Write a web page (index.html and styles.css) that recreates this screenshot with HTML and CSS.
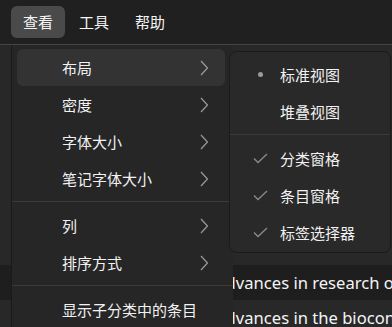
FILE: index.html
```html
<!DOCTYPE html>
<html lang="zh-CN">
<head>
<meta charset="utf-8">
<title>查看</title>
<link rel="stylesheet" href="styles.css">
</head>
<body>
<div class="app">
  <div class="menubar">
    <div class="mb-item active">查看</div>
    <div class="mb-item">工具</div>
    <div class="mb-item">帮助</div>
  </div>
  <div class="workspace">
    <div class="sidebar">
      <div class="side-row sel"></div>
      <div class="side-gap"></div>
      <div class="side-row empty"></div>
      <div class="side-row hl"></div>
    </div>
    <div class="pane">
      <div class="row dark"><span class="title">Advances in research on the biocontrol</span></div>
      <div class="row"><span class="title">Advances in the biocontrol of plant diseases</span></div>
    </div>
  </div>

  <div class="menu main-menu">
    <div class="item open"><span class="label">布局</span><svg class="chev" viewBox="0 0 9 16"><path d="M1 1 L7.5 8 L1 15"/></svg></div>
    <div class="item"><span class="label">密度</span><svg class="chev" viewBox="0 0 9 16"><path d="M1 1 L7.5 8 L1 15"/></svg></div>
    <div class="item"><span class="label">字体大小</span><svg class="chev" viewBox="0 0 9 16"><path d="M1 1 L7.5 8 L1 15"/></svg></div>
    <div class="item"><span class="label">笔记字体大小</span><svg class="chev" viewBox="0 0 9 16"><path d="M1 1 L7.5 8 L1 15"/></svg></div>
    <div class="sep"></div>
    <div class="item"><span class="label">列</span><svg class="chev" viewBox="0 0 9 16"><path d="M1 1 L7.5 8 L1 15"/></svg></div>
    <div class="item"><span class="label">排序方式</span><svg class="chev" viewBox="0 0 9 16"><path d="M1 1 L7.5 8 L1 15"/></svg></div>
    <div class="sep"></div>
    <div class="item"><span class="label">显示子分类中的条目</span></div>
  </div>

  <div class="menu sub-menu">
    <div class="sitem"><span class="mark"><span class="dot"></span></span><span class="label">标准视图</span></div>
    <div class="sitem"><span class="mark"></span><span class="label">堆叠视图</span></div>
    <div class="ssep"></div>
    <div class="sitem"><span class="mark"><svg class="check" viewBox="0 0 15 11"><path d="M1 5.5 L5 9.5 L14 1"/></svg></span><span class="label">分类窗格</span></div>
    <div class="sitem"><span class="mark"><svg class="check" viewBox="0 0 15 11"><path d="M1 5.5 L5 9.5 L14 1"/></svg></span><span class="label">条目窗格</span></div>
    <div class="sitem"><span class="mark"><svg class="check" viewBox="0 0 15 11"><path d="M1 5.5 L5 9.5 L14 1"/></svg></span><span class="label">标签选择器</span></div>
  </div>
</div>
</body>
</html>
```

FILE: styles.css
```css
* { box-sizing: border-box; }
html, body {
  margin: 0;
  padding: 0;
  width: 392px;
  height: 327px;
  overflow: hidden;
  background: #262626;
  color: #f2f2f2;
  font-family: "Noto Sans CJK SC", "Noto Sans", sans-serif;
  font-size: 15px;
}
.app {
  position: relative;
  width: 392px;
  height: 327px;
  overflow: hidden;
}
.menubar {
  height: 45px;
  background: #202020;
  border-bottom: 1px solid #444444;
  display: flex;
  align-items: flex-start;
  gap: 2px;
  padding: 6px 11px 0;
}
.mb-item {
  height: 32px;
  line-height: 32px;
  padding: 0 12px;
  border-radius: 6px;
  font-size: 15px;
  color: #f4f4f4;
}
.mb-item.active { background: #4a4a4a; }

.workspace {
  display: flex;
  height: 282px;
}
.sidebar {
  width: 11px;
  background: #2c2c2c;
  display: flex;
  flex-direction: column;
  padding-top: 5px;
}
.side-row { height: 35px; }
.side-row.sel { background: #3f3f3f; }
.side-row.empty { height: 51px; }
.side-row.hl { height: 36px; background: #434343; }
.side-gap { height: 5px; background: #1e1e1e; }

.pane {
  flex: 1;
  padding-top: 220px;
  background: #282828;
}
.row {
  height: 35px;
  display: flex;
  align-items: center;
  padding-left: 215px;
  white-space: nowrap;
  overflow: hidden;
  font-family: "Noto Sans", sans-serif;
  font-size: 16.6px;
  color: #f4f4f4;
}
.row.dark { background: #1e1e1e; }

.menu {
  position: absolute;
}
.main-menu {
  left: 11px;
  top: 45px;
  width: 222px;
  height: 300px;
  background: #262626;
  border-left: 1px solid #1a1a1a;
  padding: 4px 8px 0 5px;
}
.item {
  height: 37px;
  display: flex;
  align-items: center;
  padding-left: 45px;
  padding-right: 16px;
  border-radius: 6px;
}
.item.open { background: #333333; }
.item .label { flex: 1; }
.chev {
  width: 9px;
  height: 16px;
  fill: none;
  stroke: #9c9c9c;
  stroke-width: 1.2;
}
.sep {
  height: 1px;
  background: #3a3a3a;
  margin: 4px -8px 5px -5px;
}

.sub-menu {
  left: 229px;
  top: 51px;
  width: 162px;
  height: 202px;
  background: #292929;
  border: 1px solid #1b1b1b;
  border-radius: 8px;
  padding-top: 4px;
}
.sitem {
  height: 37px;
  display: flex;
  align-items: center;
}
.mark {
  width: 50px;
  height: 37px;
  display: flex;
  align-items: center;
  justify-content: center;
  padding-left: 10px;
}
.dot {
  width: 5px;
  height: 5px;
  border-radius: 50%;
  background: #9a9a9a;
}
.check {
  width: 15px;
  height: 11px;
  fill: none;
  stroke: #8a8a8a;
  stroke-width: 1.3;
}
.ssep {
  height: 1px;
  background: #3a3a3a;
  margin: 4px 0 5px;
}
```
